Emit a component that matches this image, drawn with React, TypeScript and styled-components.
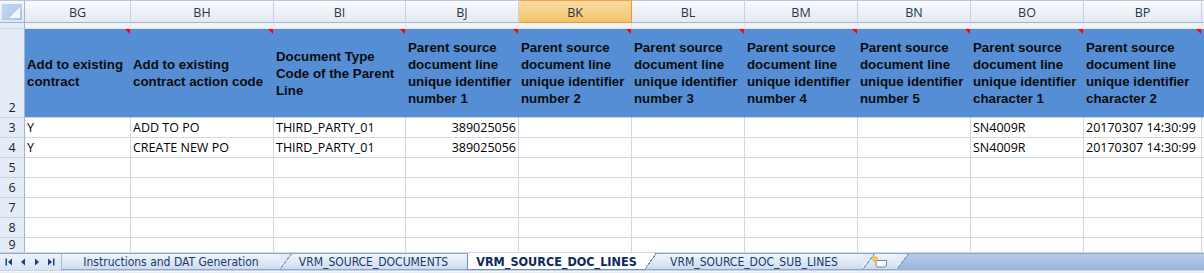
import { Fragment } from "react";
import styled, { createGlobalStyle, css } from "styled-components";

const GRID = "#d0d7e5";
const HEAD_LINE = "#9eb6ce";
const BLUE = "#558ed5";
const NAV = "#1a3f7f";

const GlobalStyle = createGlobalStyle`
  html, body {
    margin: 0;
    padding: 0;
    background: #fff;
    overflow: hidden;
  }
  * {
    box-sizing: border-box;
  }
`;

const Workbook = styled.div`
  width: 1204px;
  height: 273px;
  display: flex;
  flex-direction: column;
  overflow: hidden;
  font-family: "Open Sans", "Liberation Sans", sans-serif;
`;

const Sheet = styled.div<{ $cols: string }>`
  display: grid;
  grid-template-columns: ${({ $cols }) => $cols};
  grid-template-rows: 23px 6px 89px repeat(6, 20px) 15px;
  height: 253px;
  overflow: hidden;
`;

const Corner = styled.div`
  display: flex;
  align-items: flex-end;
  justify-content: flex-end;
  padding: 3px 2px 2px 2px;
  background: linear-gradient(#f4f7fb, #dfe7f2);
  border-top: 1px solid #b7c8de;
  border-right: 1px solid ${HEAD_LINE};
  border-bottom: 1px solid ${HEAD_LINE};

  & > span {
    display: flex;
    align-items: flex-end;
    justify-content: flex-end;
    width: 100%;
    height: 100%;
    padding: 2px;
    background: linear-gradient(135deg, #c6d8f0, #a9c3e8);
  }
`;

const ColHeader = styled.div<{ $selected?: boolean }>`
  display: flex;
  align-items: center;
  justify-content: center;
  padding-top: 2px;
  font-size: 12.5px;
  color: #27374d;
  background: linear-gradient(#f9fbfd, #e3e9f2);
  border-top: 1px solid #b7c8de;
  border-right: 1px solid #c5d2e3;
  border-bottom: 1px solid ${HEAD_LINE};

  ${({ $selected }) =>
    $selected &&
    css`
      background: linear-gradient(#f9dca6, #f2c466);
      border-top-color: #f2a441;
      border-right-color: #f29536;
      border-bottom-color: #f29536;
    `}
`;

const RowHeader = styled.div<{ $bottom?: boolean }>`
  display: flex;
  justify-content: center;
  align-items: ${({ $bottom }) => ($bottom ? "flex-end" : "center")};
  padding-bottom: ${({ $bottom }) => ($bottom ? "1px" : "0")};
  overflow: hidden;
  background: #e4ecf7;
  border-right: 1px solid ${HEAD_LINE};
  border-bottom: 1px solid #c5d3e5;
  font-size: 12.5px;
  line-height: 16px;
  color: #222;
`;

const StripCell = styled.div`
  background: #f1f2f4;
  border-right: 1px solid #e0e4ea;
  border-bottom: 1px solid #e0e4ea;
`;

const HeadCell = styled.div`
  position: relative;
  display: flex;
  align-items: center;
  padding: 0 2px;
  background: ${BLUE};
  border-right: 1px solid ${BLUE};
  border-bottom: 1px solid ${GRID};
  font-family: "Liberation Sans", Arial, sans-serif;
  font-weight: 700;
  font-size: 13.3px;
  line-height: 17px;
  color: #0d0d0d;

  &::after {
    content: "";
    position: absolute;
    top: 0;
    right: 0;
    border-top: 5px solid #ff0000;
    border-left: 5px solid transparent;
  }
`;

const Cell = styled.div<{ $right?: boolean }>`
  display: flex;
  align-items: center;
  justify-content: ${({ $right }) => ($right ? "flex-end" : "flex-start")};
  padding: 0 2px;
  overflow: hidden;
  white-space: nowrap;
  border-right: 1px solid ${GRID};
  border-bottom: 1px solid ${GRID};
  font-size: 12.5px;
  color: #000;
`;

const TabBar = styled.div`
  display: flex;
  height: 17px;
  border-top: 1px solid #8ea8cf;
  font-family: "DejaVu Sans Condensed", "DejaVu Sans", sans-serif;
  font-stretch: condensed;
`;

const NavGroup = styled.div`
  display: flex;
  align-items: center;
  flex: none;
  width: 62px;
  padding-left: 2px;
  background: linear-gradient(#edf2f9, #d8e3f2);
  border-right: 1px solid #a6bbd9;
`;

const NavButton = styled.span`
  display: flex;
  align-items: center;
  justify-content: center;
  width: 14px;
  height: 100%;
`;

const SheetTab = styled.div<{ $active?: boolean; $width: number; $z: number }>`
  position: relative;
  z-index: ${({ $z }) => $z};
  flex: none;
  width: ${({ $width }) => $width}px;
  display: flex;
  align-items: center;
  justify-content: center;
  white-space: nowrap;
  font-size: 12px;
  color: #1b3a6b;
  background: linear-gradient(#f1f5fb, #cedcf0);
  border-bottom: 1px solid #8ea8cf;

  &::after {
    content: "";
    position: absolute;
    top: 0;
    bottom: -1px;
    left: 100%;
    width: 12px;
    background: linear-gradient(
      to bottom right,
      #e2eaf6 calc(50% - 1px),
      #7f9bc6 calc(50% - 1px),
      #7f9bc6 50%,
      transparent 50%
    );
  }

  ${({ $active }) =>
    $active &&
    css`
      margin-top: -1px;
      background: #fff;
      font-weight: 700;
      font-size: 12.5px;
      color: #0c2a5b;
      border-left: 1px solid #6f8dbd;
      border-bottom-color: #6f8dbd;

      &::after {
        background: linear-gradient(
          to bottom right,
          #fff calc(50% - 1px),
          #6f8dbd calc(50% - 1px),
          #6f8dbd 50%,
          transparent 50%
        );
      }
    `}
`;

const TabFiller = styled.div`
  flex: 1;
  background: linear-gradient(#b6cae8, #9ab4dc);
`;

const BottomStrip = styled.div`
  height: 3px;
  background: linear-gradient(#fafbfd, #e4e8ee);
  border-top: 1px solid #c4d2e6;
`;

type Column = { id: string; width: number; title: string; right?: boolean; selected?: boolean };

const parent = "Parent source document line unique identifier";

const columns: Column[] = [
  { id: "BG", width: 106, title: "Add to existing contract" },
  { id: "BH", width: 143, title: "Add to existing contract action code" },
  { id: "BI", width: 132, title: "Document Type Code of the Parent Line" },
  { id: "BJ", width: 113, title: `${parent} number 1`, right: true },
  { id: "BK", width: 113, title: `${parent} number 2`, selected: true },
  { id: "BL", width: 113, title: `${parent} number 3` },
  { id: "BM", width: 113, title: `${parent} number 4` },
  { id: "BN", width: 113, title: `${parent} number 5` },
  { id: "BO", width: 113, title: `${parent} character 1` },
  { id: "BP", width: 118, title: `${parent} character 2` },
  { id: "BQ", width: 120, title: `${parent} character 3` },
];

const rows: Record<string, string>[] = [
  { BG: "Y", BH: "ADD TO PO", BI: "THIRD_PARTY_01", BJ: "389025056", BO: "SN4009R", BP: "20170307 14:30:99" },
  { BG: "Y", BH: "CREATE NEW PO", BI: "THIRD_PARTY_01", BJ: "389025056", BO: "SN4009R", BP: "20170307 14:30:99" },
  {},
  {},
  {},
  {},
  {},
];

const tabs = [
  { name: "Instructions and DAT Generation", width: 218 },
  { name: "VRM_SOURCE_DOCUMENTS", width: 187 },
  { name: "VRM_SOURCE_DOC_LINES", width: 178, active: true },
  { name: "VRM_SOURCE_DOC_SUB_LINES", width: 218 },
];

const CornerMark = () => (
  <svg width="11" height="11" viewBox="0 0 11 11">
    <path d="M11 0 L11 11 L0 11 Z" fill="#f3f7fc" />
  </svg>
);

const NavIcon = ({ dir, end }: { dir: "left" | "right"; end?: boolean }) => (
  <svg width="8" height="8" viewBox="0 0 8 8">
    {dir === "left" ? (
      <>
        {end && <rect x="0.5" y="0.5" width="1.5" height="7" fill={NAV} />}
        <path d={end ? "M7 0.5 L3 4 L7 7.5 Z" : "M6 0.5 L2 4 L6 7.5 Z"} fill={NAV} />
      </>
    ) : (
      <>
        <path d={end ? "M1 0.5 L5 4 L1 7.5 Z" : "M2 0.5 L6 4 L2 7.5 Z"} fill={NAV} />
        {end && <rect x="6" y="0.5" width="1.5" height="7" fill={NAV} />}
      </>
    )}
  </svg>
);

const InsertSheetIcon = () => (
  <svg width="18" height="13" viewBox="0 0 18 13">
    <path d="M5 5.5 H15.5 V10 Q15.5 12 13.5 12 H7 Q5 12 5 10 Z" fill="#fdfdfe" stroke="#6c86b0" strokeWidth="1" />
    <path d="M4 1 V7 M1 4 H7 M2 2 L6 6 M6 2 L2 6" stroke="#f0a320" strokeWidth="1.2" />
    <circle cx="4" cy="4" r="1.6" fill="#ffd24a" />
  </svg>
);

export default function App() {
  const template = `25px ${columns.map((c) => `${c.width}px`).join(" ")}`;

  return (
    <>
      <GlobalStyle />
      <Workbook>
        <Sheet $cols={template}>
          <Corner>
            <span>
              <CornerMark />
            </span>
          </Corner>
          {columns.map((c) => (
            <ColHeader key={c.id} $selected={c.selected}>
              {c.id}
            </ColHeader>
          ))}

          <RowHeader $bottom>1</RowHeader>
          {columns.map((c) => (
            <StripCell key={c.id} />
          ))}

          <RowHeader $bottom>2</RowHeader>
          {columns.map((c) => (
            <HeadCell key={c.id}>{c.title}</HeadCell>
          ))}

          {rows.map((row, i) => (
            <Fragment key={i}>
              <RowHeader>{i + 3}</RowHeader>
              {columns.map((c) => (
                <Cell key={c.id} $right={c.right}>
                  {row[c.id] ?? ""}
                </Cell>
              ))}
            </Fragment>
          ))}
        </Sheet>

        <TabBar>
          <NavGroup>
            <NavButton>
              <NavIcon dir="left" end />
            </NavButton>
            <NavButton>
              <NavIcon dir="left" />
            </NavButton>
            <NavButton>
              <NavIcon dir="right" />
            </NavButton>
            <NavButton>
              <NavIcon dir="right" end />
            </NavButton>
          </NavGroup>
          {tabs.map((t, i) => (
            <SheetTab key={t.name} $width={t.width} $active={t.active} $z={t.active ? 20 : 10 - i}>
              {t.name}
            </SheetTab>
          ))}
          <SheetTab $width={34} $z={5}>
            <InsertSheetIcon />
          </SheetTab>
          <TabFiller />
        </TabBar>
        <BottomStrip />
      </Workbook>
    </>
  );
}
